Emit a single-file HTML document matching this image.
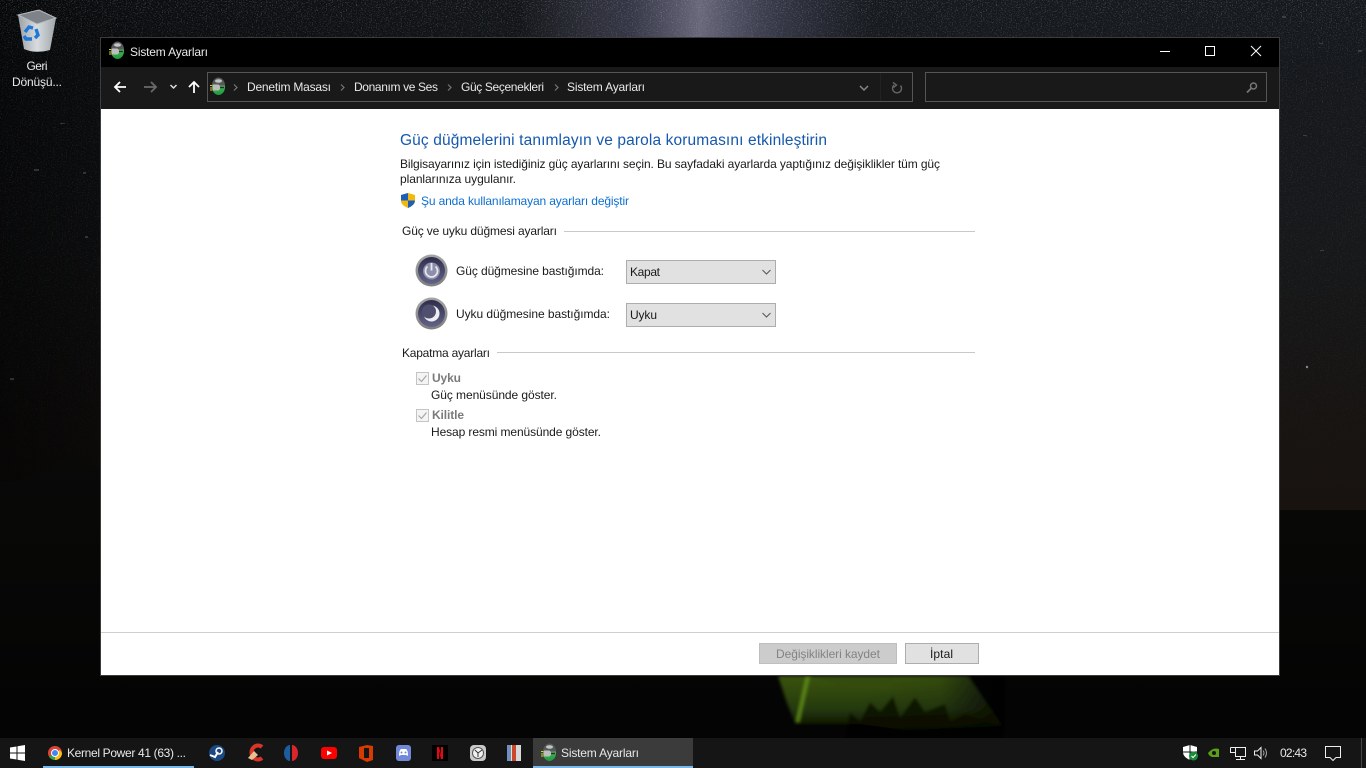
<!DOCTYPE html>
<html lang="tr"><head><meta charset="utf-8"><title>Sistem Ayarları</title>
<style>
html,body{margin:0;padding:0;width:1366px;height:768px;overflow:hidden;background:#000}
svg{display:block}
text{font-family:"Liberation Sans",sans-serif;font-size:12px;fill:#000}
.w{fill:#e8e8e8}
.d{fill:#1a1a1a}
</style></head><body>
<svg width="1366" height="768" viewBox="0 0 1366 768" xmlns="http://www.w3.org/2000/svg">
<defs>
<linearGradient id="sky" x1="0" y1="0" x2="0" y2="1">
<stop offset="0" stop-color="#15181c"/><stop offset=".45" stop-color="#16181a"/><stop offset=".8" stop-color="#171412"/><stop offset="1" stop-color="#19130f"/>
</linearGradient>
<linearGradient id="lft" x1="0" y1="0" x2="1" y2="0">
<stop offset="0" stop-color="#000" stop-opacity=".7"/><stop offset=".08" stop-color="#000" stop-opacity=".5"/><stop offset=".5" stop-color="#000" stop-opacity="0"/>
</linearGradient>
<linearGradient id="mw" x1="0" y1="0" x2="1" y2="0">
<stop offset="0" stop-color="#5e5e70" stop-opacity="0"/><stop offset=".3" stop-color="#4a4a60" stop-opacity=".6"/><stop offset=".5" stop-color="#68687a"/><stop offset=".72" stop-color="#484a60" stop-opacity=".6"/><stop offset="1" stop-color="#3a3c50" stop-opacity="0"/>
</linearGradient>
<linearGradient id="gnd" x1="0" y1="0" x2="0" y2="1">
<stop offset="0" stop-color="#090908"/><stop offset="1" stop-color="#030303"/>
</linearGradient>
<linearGradient id="tent" x1="0" y1="0" x2="0" y2="1">
<stop offset="0" stop-color="#3a5410"/><stop offset=".6" stop-color="#263a0a"/><stop offset="1" stop-color="#070c02"/>
</linearGradient>
<linearGradient id="tr" x1="0" y1="0" x2="1" y2="0">
<stop offset="0" stop-color="#040404" stop-opacity="0"/><stop offset=".55" stop-color="#040404" stop-opacity=".1"/><stop offset="1" stop-color="#040404" stop-opacity=".85"/>
</linearGradient>
<linearGradient id="fade" x1="0" y1="0" x2="0" y2="1">
<stop offset="0" stop-color="#fff" stop-opacity=".55"/><stop offset=".12" stop-color="#fff" stop-opacity=".25"/><stop offset=".8" stop-color="#fff" stop-opacity=".08"/><stop offset="1" stop-color="#fff" stop-opacity="0"/>
</linearGradient>
<mask id="fm" maskUnits="userSpaceOnUse" x="0" y="0" width="1366" height="510"><rect width="1366" height="510" fill="url(#fade)"/></mask>
<filter id="stars" x="0" y="0" width="100%" height="100%" color-interpolation-filters="sRGB">
<feTurbulence type="fractalNoise" baseFrequency=".8" numOctaves="2" seed="7"/>
<feColorMatrix values="0 0 0 0 .72  0 0 0 0 .72  0 0 0 0 .78  3.2 3.2 0 0 -3.3"/>
</filter>
<filter id="bl" x="-5%" y="-15%" width="110%" height="130%"><feGaussianBlur stdDeviation="1.600"/></filter>
<linearGradient id="ring" x1="0" y1="0" x2="0" y2="1"><stop offset="0" stop-color="#a5a5a5"/><stop offset="1" stop-color="#7f7f7f"/></linearGradient>
<linearGradient id="core" x1="0" y1="0" x2="0" y2="1"><stop offset="0" stop-color="#2e2e4a"/><stop offset="1" stop-color="#63638a"/></linearGradient>
<linearGradient id="bin" x1="0" y1="0" x2="1" y2="0"><stop offset="0" stop-color="#9aa0a5"/><stop offset=".5" stop-color="#d8dcdf"/><stop offset="1" stop-color="#9ea4a9"/></linearGradient>
<linearGradient id="bat" x1="0" y1="0" x2="0" y2="1"><stop offset="0" stop-color="#6cc46c"/><stop offset="1" stop-color="#1c9a3c"/></linearGradient>
<g id="batt">
<ellipse cx="1.500" cy="0" rx="6.500" ry="8" fill="url(#bat)"/>
<path d="M-5-1.500A6.500 8 0 0 1 8-1.500Z" fill="#55595a"/>
<ellipse cx="1.500" cy="-6" rx="3.500" ry="1.700" fill="#c4c4c4"/>
<path d="M-4-2.500H1.500L3-1V2L1.500 3.500H-4Z" fill="#bdbdbd"/>
<path d="M3 .5H7" stroke="#2c2c2c" stroke-width="1.400"/>
<path d="M-7-1.500h2.500M-7 1h2.500M-7 3h2.500" stroke="#e3c834" stroke-width="1"/>
</g>
</defs>

<!-- wallpaper -->
<rect width="1366" height="520" fill="url(#sky)"/>
<rect width="1366" height="520" fill="url(#lft)"/>
<rect x="520" y="0" width="360" height="38" fill="url(#mw)"/>
<g mask="url(#fm)"><rect width="1366" height="510" filter="url(#stars)" opacity=".55"/></g>
<g fill="#8a8c90" opacity=".3">
<rect x="1282" y="16" width="4" height="2"/><rect x="1319" y="43" width="4" height="1"/><rect x="1358" y="50" width="4" height="2"/><rect x="1303" y="135" width="4" height="1"/><rect x="1320" y="250" width="4" height="1"/><rect x="60" y="123" width="5" height="1"/><rect x="34" y="169" width="5" height="2"/><rect x="83" y="172" width="3" height="2"/><rect x="85" y="236" width="3" height="2"/><rect x="10" y="378" width="4" height="2"/>
</g>
<circle cx="1307" cy="367" r="1.200" fill="#888"/>
<!-- ground -->
<path d="M0 482L22 480 45 470 70 455 90 463 105 472 200 490 420 510H1366V768H0Z" fill="url(#gnd)"/>
<!-- tent -->
<g filter="url(#bl)">
<path d="M778 676H968L1003 726 905 730 860 724 795 724 786 700Z" fill="url(#tent)"/>
<path d="M860 676H1005V730H860Z" fill="url(#tr)"/>
<path d="M806 676L796 722 799 722 810 676Z" fill="#5c8618"/>
<path d="M810 676Q860 692 892 688L894 676Z" fill="#344c10"/>
<path d="M845 738L850 712 860 722 870 702 880 712 893 696 900 718 915 697 925 712 945 704 950 722 965 714 1003 728V738Z" fill="#060803" opacity=".7"/>
</g>

<!-- recycle bin -->
<path d="M18 15L39 10 56 18 50 50Q35 54 24 49Z" fill="url(#bin)"/>
<path d="M18 15L39 10 56 18 37 24Z" fill="#7d8388"/>
<path d="M18 15L39 10 56 18 37 24Z" fill="none" stroke="#b8bcc0" stroke-width="1"/>
<g fill="none" stroke="#1e78d8" stroke-width="3.400">
<path d="M25 32L29 27 33 28"/><path d="M36 29L38 35 35 38"/><path d="M32 39H26L24 36"/>
</g>
<text x="37" y="70" text-anchor="middle" class="w" textLength="21">Geri</text>
<text x="12" y="86" class="w" textLength="50">Dönüşü...</text>

<!-- window -->
<rect x="100.500" y="37.500" width="1179" height="638" fill="#fff" stroke="#3c3c3c"/>
<rect x="101" y="38" width="1178" height="29" fill="#000"/>
<rect x="101" y="67" width="1178" height="42" fill="#191919"/>
<use href="#batt" x="116" y="51"/>
<text x="130" y="56" class="w" textLength="78">Sistem Ayarları</text>
<path d="M1160 51.500H1170" stroke="#fff"/>
<rect x="1205.500" y="46.500" width="9" height="9" fill="none" stroke="#fff"/>
<path d="M1251 46L1261 56M1261 46L1251 56" stroke="#fff" fill="none"/>

<!-- nav -->
<g fill="none" stroke-width="1.800">
<path d="M126 87H115M120 82L115 87 120 92" stroke="#fff"/>
<path d="M144 87H156M151 82L156 87 151 92" stroke="#6a6a6a"/>
<path d="M170.500 85L173.500 88 176.500 85" stroke="#ddd" stroke-width="1.500"/>
<path d="M194 93V82M189 87L194 82 199 87" stroke="#fff"/>
</g>
<rect x="207.500" y="72.500" width="705" height="29" fill="#191919" stroke="#555"/>
<use href="#batt" x="217" y="87"/>
<g fill="none" stroke="#777" stroke-width="1.200">
<path d="M234 84.500L237 87.500 234 90.500"/><path d="M341 84.500L344 87.500 341 90.500"/><path d="M448 84.500L451 87.500 448 90.500"/><path d="M555 84.500L558 87.500 555 90.500"/>
</g>
<text x="247" y="91" class="w" textLength="84">Denetim Masası</text>
<text x="354" y="91" class="w" textLength="84">Donanım ve Ses</text>
<text x="461" y="91" class="w" textLength="83">Güç Seçenekleri</text>
<text x="567" y="91" class="w" textLength="78">Sistem Ayarları</text>
<path d="M860 86L864 90 868 86" fill="none" stroke="#888" stroke-width="1.500"/>
<path d="M880.500 73V101" stroke="#222"/>
<path d="M900.500 85.500A4.500 4.500 0 1 1 894 85M893 82.500L896.500 85 893.500 87.500" fill="none" stroke="#666" stroke-width="1.400"/>
<rect x="925.500" y="72.500" width="341" height="29" fill="#191919" stroke="#555"/>
<circle cx="1253.500" cy="86" r="3" fill="none" stroke="#777" stroke-width="1.500"/>
<path d="M1251 88.500L1247 92.500" stroke="#777" stroke-width="1.800"/>

<!-- content -->
<text x="400" y="145" style="font-size:15.500px;fill:#1558ae" textLength="427">Güç düğmelerini tanımlayın ve parola korumasını etkinleştirin</text>
<text x="400" y="168" class="d" textLength="540">Bilgisayarınız için istediğiniz güç ayarlarını seçin. Bu sayfadaki ayarlarda yaptığınız değişiklikler tüm güç</text>
<text x="400" y="183" class="d" textLength="116">planlarınıza uygulanır.</text>
<path d="M408 193L415 195V201Q415 205 408 208 401 205 401 201V195Z" fill="#f2b90f"/>
<path d="M408 193V200.500H401V195ZM408 200.500H415Q415 205 408 208Z" fill="#1d5fb8"/>
<text x="421" y="205" style="fill:#0c6fd0" textLength="208">Şu anda kullanılamayan ayarları değiştir</text>
<text x="402" y="235" class="d" textLength="155">Güç ve uyku düğmesi ayarları</text>
<path d="M564 231.500H975M497 352.500H975" stroke="#c9c9c9"/>

<circle cx="431.500" cy="270.500" r="16" fill="url(#ring)"/>
<circle cx="431.500" cy="270.500" r="13.500" fill="url(#core)"/>
<circle cx="431.500" cy="271" r="8.500" fill="#8e8eaa"/>
<path d="M427.500 266.500A6 6 0 1 0 435.500 266.500" fill="none" stroke="#e6e6ee" stroke-width="1.800"/>
<path d="M431.500 263V270.500" stroke="#e6e6ee" stroke-width="1.800"/>

<circle cx="431.500" cy="313.500" r="16" fill="url(#ring)"/>
<circle cx="431.500" cy="313.500" r="13.500" fill="url(#core)"/>
<circle cx="431.500" cy="313.500" r="8" fill="#eeeef2"/>
<circle cx="429" cy="311.500" r="7" fill="#50506e"/>

<text x="456" y="275" class="d" textLength="148">Güç düğmesine bastığımda:</text>
<text x="456" y="318" class="d" textLength="154">Uyku düğmesine bastığımda:</text>
<rect x="626.500" y="260.500" width="149" height="23" fill="#e1e1e1" stroke="#adadad"/>
<rect x="626.500" y="303.500" width="149" height="23" fill="#e1e1e1" stroke="#adadad"/>
<text x="630" y="276" class="d" textLength="30">Kapat</text>
<text x="630" y="319" class="d" textLength="27">Uyku</text>
<path d="M762.500 270L766.500 274 770.500 270M762.500 313L766.500 317 770.500 313" fill="none" stroke="#555"/>

<text x="402" y="357" class="d" textLength="88">Kapatma ayarları</text>
<rect x="416.500" y="372.500" width="12" height="12" fill="#f4f4f4" stroke="#c4c4c4"/>
<rect x="416.500" y="409.500" width="12" height="12" fill="#f4f4f4" stroke="#c4c4c4"/>
<path d="M418.500 378.500L421.500 381.500 426.500 375.500M418.500 415.500L421.500 418.500 426.500 412.500" fill="none" stroke="#a8a8a8" stroke-width="1.200"/>
<text x="432" y="382" style="font-weight:bold;fill:#7a7a7a" textLength="29">Uyku</text>
<text x="431" y="399" class="d" textLength="126">Güç menüsünde göster.</text>
<text x="432" y="419" style="font-weight:bold;fill:#7a7a7a" textLength="32">Kilitle</text>
<text x="431" y="436" class="d" textLength="170">Hesap resmi menüsünde göster.</text>

<path d="M101 632.500H1279" stroke="#cfcfcf"/>
<rect x="759.500" y="643.500" width="137" height="20" fill="#cccccc" stroke="#bfbfbf"/>
<text x="776" y="658" style="fill:#838383" textLength="104">Değişiklikleri kaydet</text>
<rect x="905.500" y="643.500" width="73" height="20" fill="#e1e1e1" stroke="#adadad"/>
<text x="930" y="658" class="d" textLength="23">İptal</text>

<!-- taskbar -->
<rect y="738" width="1366" height="30" fill="#151515"/>
<rect x="533" y="738" width="160" height="30" fill="#3b3b3b"/>
<rect x="43" y="766" width="151" height="2" fill="#79b8e8"/>
<rect x="533" y="766" width="160" height="2" fill="#79b8e8"/>
<path d="M10 747.500L16.500 746.500V752.500H10ZM17.500 746.300L25 745V752.500H17.500ZM10 753.500H16.500V759.500L10 758.500ZM17.500 753.500H25V761L17.500 759.700Z" fill="#fff"/>
<!-- chrome -->
<circle cx="55" cy="753" r="7" fill="#dc4437"/>
<path d="M55 753L49 756.500A7 7 0 0 0 55 760L60 753Z" fill="#2fa350"/>
<path d="M55 753L60 750 62 753A7 7 0 0 1 55 760Z" fill="#f4c20d"/>
<circle cx="55" cy="753" r="3.500" fill="#4285f4" stroke="#fff"/>
<text x="67" y="757" class="w" textLength="119">Kernel Power 41 (63) ...</text>
<!-- steam -->
<circle cx="217" cy="753" r="8" fill="#1b4a83"/>
<circle cx="219" cy="751" r="3" fill="none" stroke="#fff" stroke-width="1.500"/>
<path d="M210 755L215 757 218 752" stroke="#fff" stroke-width="2" fill="none"/>
<!-- ccleaner -->
<path d="M262 747A6.500 7 0 1 0 262 758" fill="none" stroke="#d8352a" stroke-width="4"/>
<path d="M248 758L254 751 258 755 252 760Z" fill="#e8c090"/>
<!-- red/blue -->
<path d="M290 745A6 8 0 0 0 290 761Z" fill="#1d5c9e"/>
<path d="M292 745A6 8 0 0 1 292 761Z" fill="#d8262c"/>
<!-- youtube -->
<rect x="321" y="747" width="16" height="12" rx="3" fill="#f00"/>
<path d="M327 750.500L332 753 327 755.500Z" fill="#fff"/>
<!-- office -->
<path d="M359 747L367 745 373 746V760L367 762 359 758Z" fill="#d83b01"/>
<rect x="364" y="748" width="5" height="10" fill="#151515"/>
<!-- discord -->
<rect x="396" y="745" width="15" height="16" rx="3" fill="#7289da"/>
<path d="M399 756Q399 750 401 749H406Q408 750 408 756L406 755H401Z" fill="#fff"/>
<circle cx="401.500" cy="752.500" r="1" fill="#7289da"/><circle cx="405.500" cy="752.500" r="1" fill="#7289da"/>
<!-- netflix -->
<rect x="432" y="745" width="16" height="16" fill="#000"/>
<path d="M437 747V759H439V751L441 759H443V747H441V755L439 747Z" fill="#e50914"/>
<!-- clock -->
<rect x="470" y="745" width="16" height="16" rx="4" fill="#c9c9c9"/>
<circle cx="478" cy="753" r="5.500" fill="#f2f2f2" stroke="#555"/>
<path d="M478 753L475 750M478 753L482 750M478 753V757" stroke="#333"/>
<!-- multi -->
<rect x="507" y="745" width="5" height="16" fill="#e8e0c8"/><rect x="512" y="745" width="4" height="16" fill="#c94a2a"/><rect x="516" y="745" width="5" height="16" fill="#d8d8d8"/>
<path d="M507 745H511V761H507Z" fill="#3a6fb5" opacity=".7"/>
<use href="#batt" x="548" y="753"/>
<text x="561" y="757" class="w" textLength="78">Sistem Ayarları</text>
<!-- tray -->
<path d="M1190 745L1197 747V752Q1197 757 1190 760 1183 757 1183 752V747Z" fill="#fff"/>
<path d="M1190 745V760M1183 752H1197" stroke="#151515"/>
<circle cx="1193.500" cy="756" r="4.500" fill="#1a8a3c"/>
<path d="M1191.500 756L1193 757.500 1196 754.500" stroke="#fff" fill="none"/>
<path d="M1208 753Q1213 747 1219 749V757H1212Q1209 756 1208 753Z" fill="#5a9e1a"/>
<circle cx="1214" cy="753" r="2" fill="#151515"/>
<g fill="none" stroke="#eee">
<rect x="1235.500" y="747.500" width="10" height="9"/>
<path d="M1230.500 747.500H1235.500M1230.500 747.500V752.500H1235.500M1240.500 756.500V759.500M1236 759.500H1245"/>
<path d="M1254.500 751H1257.500L1261 747.500V758.500L1257.500 755H1254.500Z"/>
<path d="M1263 750.500Q1265 753 1263 755.500M1265 748.500Q1268 753 1265 757.500" stroke="#aaa"/>
<path d="M1325.500 746.500H1340.500V757.500H1336L1333 760.500 1330 757.500H1325.500Z"/>
</g>
<text x="1280" y="757" class="w" textLength="27">02:43</text>
<path d="M1361.500 738V768" stroke="#444"/>
</svg>
</body></html>
